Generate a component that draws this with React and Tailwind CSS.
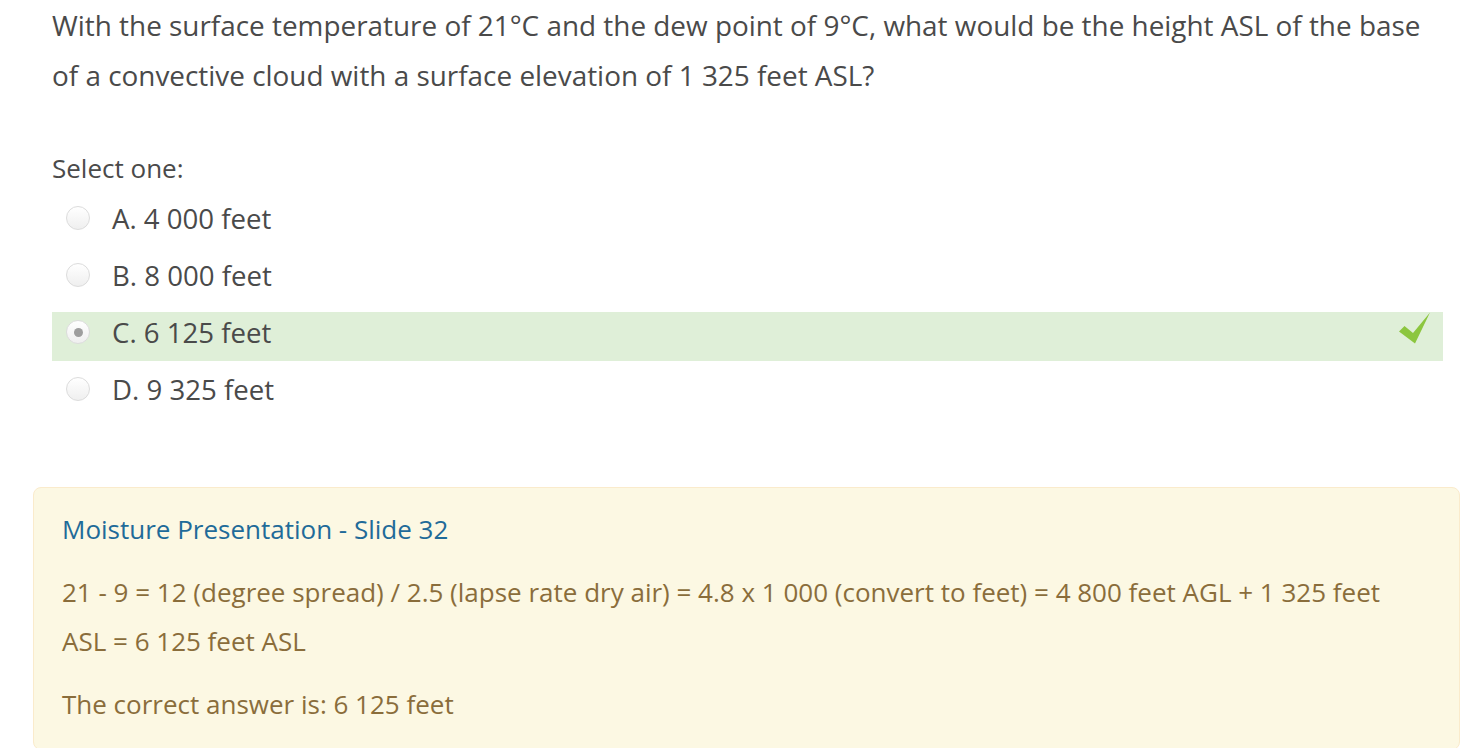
import React from "react";

const options = [
  { key: "a", label: "A. 4 000 feet" },
  { key: "b", label: "B. 8 000 feet" },
  { key: "c", label: "C. 6 125 feet", checked: true },
  { key: "d", label: "D. 9 325 feet" },
];

const Radio = ({ checked }) => (
  <span className="relative flex h-[24px] w-[24px] shrink-0 items-center justify-center rounded-full border border-[#dcdcdc] bg-gradient-to-b from-white to-[#efefef]">
    {checked && <span className="h-[9px] w-[9px] rounded-full bg-[#9e9e9e]" />}
  </span>
);

const Check = () => (
  <svg width="33" height="33" viewBox="0 0 33 33" className="mr-[12px] shrink-0">
    <polygon points="1,19.5 6.5,14 15,21 32,0.5 17,31.5" fill="#8cc63f" />
  </svg>
);

export default function App() {
  return (
    <div
      className="min-h-[748px] bg-white pl-[33px] pr-[10px] text-[#4a4a4a]"
      style={{ fontFamily: '"Open Sans", "Liberation Sans", sans-serif' }}
    >
      <div className="ml-[19px] mr-[17px]">
        <p className="pr-[16px] text-[27.9px] leading-[50px]">
          With the surface temperature of 21°C and the dew point of 9°C, what would be the height ASL of the base
          of a convective cloud with a surface elevation of 1 325 feet ASL?
        </p>

        <div className="mt-[43px] text-[26px] leading-[50px]">Select one:</div>

        <div className="mt-[5px] flex flex-col gap-[8px]">
          {options.map((o) => (
            <div
              key={o.key}
              className={
                "flex h-[49px] items-start justify-between " + (o.checked ? "bg-[#dfefd8]" : "")
              }
            >
              <div className="flex h-[40px] items-center">
                <span className="ml-[14px] mr-[22px]">
                  <Radio checked={o.checked} />
                </span>
                <span className="text-[27.6px] leading-[38px]">{o.label}</span>
              </div>
              {o.checked && <Check />}
            </div>
          ))}
        </div>
      </div>

      <div className="mt-[69px] rounded-[8px] border border-[#faebcc] bg-[#fcf8e3] pl-[28px] pr-[32px] pt-[17px] pb-[20px] text-[26px] leading-[49px] text-[#8a6d3b]">
        <div className="mb-[14px]">
          <a href="#" className="text-[#1f6b99]">
            Moisture Presentation - Slide 32
          </a>
        </div>
        <p className="mb-[14px]">
          21 - 9 = 12 (degree spread) / 2.5 (lapse rate dry air) = 4.8 x 1 000 (convert to feet) = 4 800 feet AGL + 1 325 feet
          ASL = 6 125 feet ASL
        </p>
        <p>The correct answer is: 6 125 feet</p>
      </div>
    </div>
  );
}
